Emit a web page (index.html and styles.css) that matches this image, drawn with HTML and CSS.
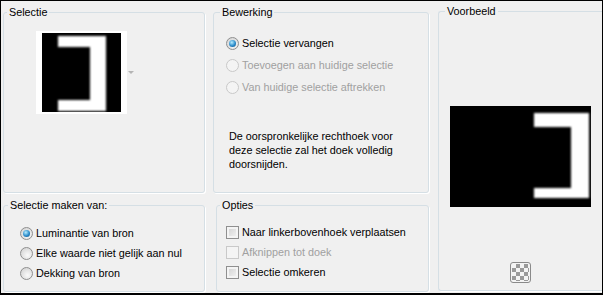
FILE: index.html
```html
<!DOCTYPE html>
<html>
<head>
  <meta name="viewport" content="width=device-width, initial-scale=1">
  <link rel="stylesheet" href="styles.css">
</head>
<body>
  <div class="dialog">
    <fieldset class="group sel">
      <legend>Selectie</legend>
      <div class="thumb-row">
        <div class="thumb">
          <svg width="79" height="79" viewBox="0 0 79 79">
            <defs><filter id="soft1"><feGaussianBlur stdDeviation="0.9"/></filter></defs>
            <rect width="79" height="79" fill="#000"/>
            <path d="M16 3 H64 V78 H16 V67 H48 V14 H16 Z" fill="#fff" filter="url(#soft1)"/>
          </svg>
        </div>
        <span class="drop-arrow"></span>
      </div>
    </fieldset>

    <fieldset class="group edit">
      <legend>Bewerking</legend>
      <div class="options wide">
        <label class="opt"><span class="radio on"></span>Selectie vervangen</label>
        <label class="opt off"><span class="radio"></span>Toevoegen aan huidige selectie</label>
        <label class="opt off"><span class="radio"></span>Van huidige selectie aftrekken</label>
      </div>
      <p class="note">De oorspronkelijke rechthoek voor<br>deze selectie zal het doek volledig<br>doorsnijden.</p>
    </fieldset>

    <fieldset class="group preview">
      <legend>Voorbeeld</legend>
      <div class="preview-img">
        <svg width="141" height="101" viewBox="0 0 141 101">
          <defs><filter id="soft2"><feGaussianBlur stdDeviation="1"/></filter></defs>
          <rect width="141" height="101" fill="#000"/>
          <path d="M84 7 H139 V92 H84 V82 H121 V21 H84 Z" fill="#fff" filter="url(#soft2)"/>
        </svg>
      </div>
      <button class="checker-btn" type="button"><span class="checker"></span></button>
    </fieldset>

    <fieldset class="group source">
      <legend>Selectie maken van:</legend>
      <div class="options">
        <label class="opt"><span class="radio on"></span>Luminantie van bron</label>
        <label class="opt"><span class="radio"></span>Elke waarde niet gelijk aan nul</label>
        <label class="opt"><span class="radio"></span>Dekking van bron</label>
      </div>
    </fieldset>

    <fieldset class="group opts">
      <legend>Opties</legend>
      <div class="options">
        <label class="opt"><span class="check"></span>Naar linkerbovenhoek verplaatsen</label>
        <label class="opt off"><span class="check"></span>Afknippen tot doek</label>
        <label class="opt"><span class="check"></span>Selectie omkeren</label>
      </div>
    </fieldset>
  </div>
</body>
</html>
```

FILE: styles.css
```css
body {
  margin: 0;
  background: #000;
  font-family: "Liberation Sans", Arial, sans-serif;
  font-size: 10.8px;
  color: #000;
}
.dialog {
  width: 601px;
  height: 292px;
  margin: 1px 0 0 1px;
  box-sizing: border-box;
  padding: 4px 0 1px 2px;
  background: #f0f0f0;
  display: grid;
  grid-template-columns: 202px 216px 1fr;
  grid-template-rows: 188px 94px;
  column-gap: 8px;
  row-gap: 5px;
  overflow: hidden;
}
.group {
  margin: 0;
  padding: 0;
  min-width: 0;
  border: 1px solid #d5dfe5;
  border-radius: 3px;
  box-shadow: 1px 1px 0 #fff;
}
.group legend {
  padding: 0 2px;
  line-height: 14px;
  margin-left: 3px;
}

/* Selectie */
.sel { grid-column: 1; grid-row: 1; }
.thumb-row {
  display: flex;
  align-items: center;
  margin: 12px 0 0 32px;
}
.thumb {
  background: #fff;
  padding: 2px 6px;
  display: flex;
}
.drop-arrow {
  margin-left: 1px;
  width: 0;
  height: 0;
  border-left: 3px solid transparent;
  border-right: 3px solid transparent;
  border-top: 3px solid #b4b4b4;
}

/* Bewerking */
.edit { grid-column: 2; grid-row: 1; }
.edit legend { margin-left: 6px; }
.options {
  display: flex;
  flex-direction: column;
}
.opt {
  display: flex;
  align-items: center;
  gap: 3px;
  height: 20px;
  white-space: nowrap;
}
.opt.off { color: #a0a0a0; }
.options.wide .opt { height: 22px; }
.edit .options { margin: 13px 0 0 12px; }
.note {
  margin: 31px 0 0 15px;
  line-height: 14px;
}

/* radio + checkbox, Windows 7 look */
.radio {
  position: relative;
  flex: none;
  width: 13px;
  height: 13px;
  box-sizing: border-box;
  border-radius: 50%;
  border: 1px solid #8f8f8f;
  background: radial-gradient(circle at 60% 65%, #fafafa, #d6d6d6 80%);
}
.radio.on::after {
  content: "";
  position: absolute;
  left: 2px;
  top: 2px;
  width: 7px;
  height: 7px;
  border-radius: 50%;
  background: radial-gradient(circle at 40% 35%, #b6ecff, #2b8ccb 55%, #0f4a7a);
}
.off .radio {
  border-color: #c9c9c9;
  background: #f4f4f4;
}
.check {
  flex: none;
  width: 13px;
  height: 13px;
  box-sizing: border-box;
  border: 1px solid #8f8f8f;
  background: linear-gradient(135deg, #cfcfcf, #f6f6f6);
  box-shadow: inset 0 0 0 2px #f4f4f4;
}
.off .check {
  border-color: #c9c9c9;
  background: #f4f4f4;
}

/* Voorbeeld */
.preview {
  grid-column: 3;
  grid-row: 1 / 3;
  margin: -1px 0 1px 1px;
  border-right: 0;
  border-radius: 3px 0 0 3px;
  display: flex;
  flex-direction: column;
  align-items: center;
}
.preview legend { margin-left: 6px; }
.preview-img {
  margin-top: 88px;
  display: flex;
}
.checker-btn {
  margin-top: 55px;
  width: 21px;
  height: 21px;
  padding: 1px;
  border: 1px solid #8a8a8a;
  border-radius: 3px;
  background: #f4f4f4;
  display: flex;
}
.checker {
  flex: 1;
  background: repeating-conic-gradient(#9a9a9a 0 25%, #f4f4f4 0 50%) 0 0 / 8px 8px;
}

/* Selectie maken van */
.source { grid-column: 1; grid-row: 2; }
.source legend { margin-left: 4px; }
.source .options { margin: 11px 0 0 16px; }

/* Opties */
.opts { grid-column: 2; grid-row: 2; margin-left: 3px; }
.opts .options { margin: 10px 0 0 9px; }
```
